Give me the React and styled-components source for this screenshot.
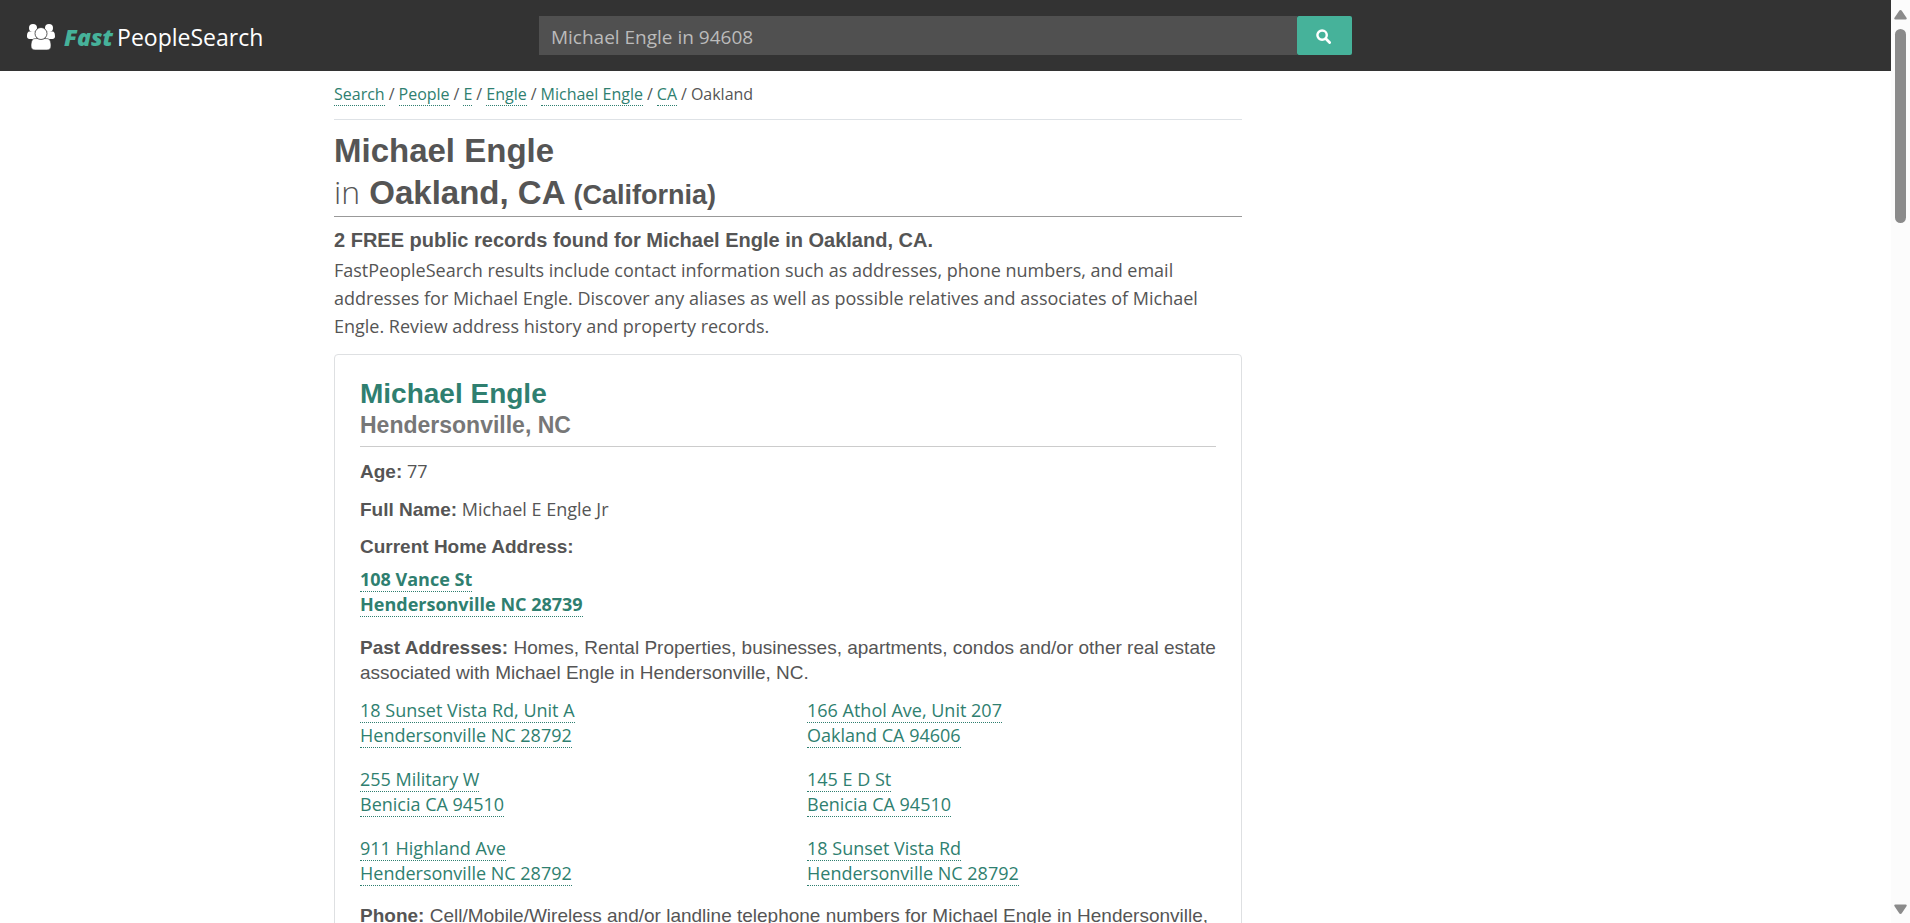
import React from "react";
import styled, { createGlobalStyle } from "styled-components";

const sans = `"Segoe UI", "Open Sans", "Noto Sans", sans-serif`;
const heading = `Arial, "Liberation Sans", sans-serif`;

const GlobalStyle = createGlobalStyle`
  *, *::before, *::after { box-sizing: border-box; }
  body {
    margin: 0;
    background: #fff;
    color: #555;
    font: 18px/25px ${sans};
  }
  h1, h2, h3, h4, p, ol, ul, dl, dd { margin: 0; padding: 0; }
`;

const Viewport = styled.div`
  display: grid;
  grid-template-columns: minmax(0, 1fr) 19px;
  height: 100vh;
`;

const Page = styled.div`
  overflow: hidden;
`;

const Header = styled.header`
  display: grid;
  grid-template-columns: 1fr 43% 1fr;
  align-items: center;
  height: 71px;
  background: #333;
`;

const Brand = styled.a`
  display: flex;
  align-items: center;
  gap: 9px;
  padding: 2px 0 0 27px;
  color: #fff;
  font-size: 23px;
  line-height: 32px;
  text-decoration: none;

  svg { width: 28px; height: 26px; }
`;

const BrandAccent = styled.em`
  margin-right: 4px;
  color: #46b29a;
  font-weight: 800;
`;

const SearchForm = styled.form`
  display: flex;
  height: 39px;
`;

const SearchInput = styled.input`
  flex: 1;
  min-width: 0;
  padding: 3px 12px 0;
  border: 0;
  border-radius: 0;
  background: #505050;
  color: #bbb;
  font: 19px/25px ${sans};
`;

const SearchButton = styled.button`
  display: grid;
  place-items: center;
  width: 55px;
  padding: 2px 2px 0 0;
  border: 0;
  border-radius: 2px;
  background: #46b29a;
  color: #fff;

  svg { width: 15px; height: 15px; }
`;

const Container = styled.div`
  display: grid;
  grid-template-columns: minmax(0, 908fr) minmax(0, 315fr);
  max-width: 1223px;
  margin: 0 auto;
`;

const Breadcrumbs = styled.ol`
  display: flex;
  gap: 4px;
  padding: 12px 0 13px;
  border-bottom: 1px solid #dee2e6;
  font-size: 16px;
  line-height: 23px;
  list-style: none;
`;

const Crumb = styled.li`
  & + &::before { content: "/"; margin-right: 4px; }
`;

const DottedLink = styled.a`
  border-bottom: 1px dotted #2f7f70;
  color: #2f7f70;
  text-decoration: none;
`;

const Title = styled.h1`
  padding: 10px 0 2px;
  border-bottom: 1px solid #999;
  font: 700 33px/42px ${heading};

  span { display: block; }
  small { font-size: 27px; line-height: 32px; }
`;

const TitleIn = styled.i`
  font: 300 32px/32px ${sans};
`;

const Summary = styled.h2`
  padding: 9px 0 2px;
  font: 700 20px/28px ${heading};
`;

const Intro = styled.p`
  margin-bottom: 14px;
  font-size: 18px;
  line-height: 28px;
`;

const Card = styled.article`
  padding: 22px 25px;
  border: 1px solid #dee0e2;
  border-radius: 4px;
`;

const CardHeader = styled.header`
  padding-bottom: 7px;
  border-bottom: 1px solid #ccc;
`;

const CardName = styled.h2`
  font: 700 28px/34px ${heading};

  a { color: #2f7f70; text-decoration: none; }
`;

const CardPlace = styled.p`
  color: #777;
  font: 700 23px/28px ${heading};
`;

const Field = styled.div`
  margin-top: ${(p) => p.$gap}px;
  font-family: ${(p) => (p.$plain ? heading : sans)};
  font-size: ${(p) => (p.$plain ? 19 : 18)}px;
  line-height: 25px;
`;

const Label = styled.h3`
  display: inline;
  font: 700 19px/25px ${heading};
`;

const Address = styled(DottedLink)`
  font-weight: ${(p) => (p.$bold ? 700 : 400)};
`;

const AddressGrid = styled.ul`
  display: grid;
  grid-template-columns: 1fr 409px;
  row-gap: 19px;
  margin-top: 13px;
  list-style: none;
`;

const ScrollTrack = styled.div`
  display: flex;
  flex-direction: column;
  align-items: center;
  padding: 9px 0 8px;
  background: #fcfcfc;

  svg { width: 13px; height: 11px; fill: #8b8b8b; }
`;

const ScrollThumb = styled.div`
  width: 11px;
  height: 194px;
  margin: 9px 0 auto;
  border-radius: 6px;
  background: #8b8b8b;
`;

const crumbs = ["Search", "People", "E", "Engle", "Michael Engle", "CA"];

const pastAddresses = [
  ["18 Sunset Vista Rd, Unit A", "Hendersonville NC 28792"],
  ["166 Athol Ave, Unit 207", "Oakland CA 94606"],
  ["255 Military W", "Benicia CA 94510"],
  ["145 E D St", "Benicia CA 94510"],
  ["911 Highland Ave", "Hendersonville NC 28792"],
  ["18 Sunset Vista Rd", "Hendersonville NC 28792"],
];

function PeopleIcon() {
  return (
    <svg viewBox="0 0 28 26" fill="#fff" aria-hidden="true">
      <circle cx="6" cy="4" r="4" />
      <circle cx="22" cy="4" r="4" />
      <path d="M2.5 7.5h7v7.5H2.5C1 15 0 14 0 12.5c0-2.500.5-5 2.500-5zM18.500 7.500h7c2 0 2.500 2.500 2.500 5 0 1.500-1 2.500-2.500 2.500h-7z" />
      <path
        d="M8 14.600h12c3 0 4 3.400 4 7.400 0 2.500-1.500 4-4 4H8c-2.500 0-4-1.500-4-4 0-4 1-7.400 4-7.400z"
        stroke="#333"
        strokeWidth="0.6"
      />
      <circle cx="14" cy="9.500" r="6" stroke="#333" strokeWidth="0.8" />
    </svg>
  );
}

function SearchIcon() {
  return (
    <svg viewBox="0 0 16 16" fill="none" stroke="currentColor" aria-hidden="true">
      <circle cx="6.500" cy="6.500" r="5" strokeWidth="2.600" />
      <path d="M10.500 10.500l4 4" strokeWidth="3" strokeLinecap="round" />
    </svg>
  );
}

export default function App() {
  return (
    <>
      <GlobalStyle />
      <Viewport>
        <Page>
          <Header>
            <Brand href="#home">
              <PeopleIcon />
              <span>
                <BrandAccent>Fast</BrandAccent>PeopleSearch
              </span>
            </Brand>
            <SearchForm role="search" onSubmit={(e) => e.preventDefault()}>
              <SearchInput aria-label="Search" defaultValue="Michael Engle in 94608" />
              <SearchButton type="submit" aria-label="Search">
                <SearchIcon />
              </SearchButton>
            </SearchForm>
          </Header>
          <Container>
            <main>
              <nav aria-label="Breadcrumb">
                <Breadcrumbs>
                  {crumbs.map((c) => (
                    <Crumb key={c}>
                      <DottedLink href="#crumb">{c}</DottedLink>
                    </Crumb>
                  ))}
                  <Crumb aria-current="page">Oakland</Crumb>
                </Breadcrumbs>
              </nav>
              <Title>
                <span>Michael Engle</span>
                <TitleIn>in</TitleIn> Oakland, CA <small>(California)</small>
              </Title>
              <Summary>2 FREE public records found for Michael Engle in Oakland, CA.</Summary>
              <Intro>
                FastPeopleSearch results include contact information such as addresses, phone
                numbers, and email addresses for Michael Engle. Discover any aliases as well as
                possible relatives and associates of Michael Engle. Review address history and
                property records.
              </Intro>
              <Card>
                <CardHeader>
                  <CardName>
                    <a href="#person">Michael Engle</a>
                  </CardName>
                  <CardPlace>Hendersonville, NC</CardPlace>
                </CardHeader>
                <Field $gap={12}>
                  <Label>Age:</Label> 77
                </Field>
                <Field $gap={13}>
                  <Label>Full Name:</Label> Michael E Engle Jr
                </Field>
                <Field $gap={12}>
                  <Label>Current Home Address:</Label>
                </Field>
                <Field $gap={8}>
                  <Address href="#address" $bold>
                    108 Vance St
                    <br />
                    Hendersonville NC 28739
                  </Address>
                </Field>
                <Field $gap={18} $plain>
                  <Label>Past Addresses:</Label> Homes, Rental Properties, businesses, apartments,
                  condos and/or other real estate associated with Michael Engle in Hendersonville,
                  NC.
                </Field>
                <AddressGrid>
                  {pastAddresses.map(([street, city]) => (
                    <li key={street}>
                      <Address href="#address">
                        {street}
                        <br />
                        {city}
                      </Address>
                    </li>
                  ))}
                </AddressGrid>
                <Field $gap={17} $plain>
                  <Label>Phone:</Label> Cell/Mobile/Wireless and/or landline telephone numbers for
                  Michael Engle in Hendersonville, NC.
                </Field>
              </Card>
            </main>
          </Container>
        </Page>
        <ScrollTrack aria-hidden="true">
          <svg viewBox="0 0 13 11">
            <path d="M6.500 1q.8 0 1.300.8l4.700 7q.8 1.700-1 1.700H1.500q-1.800 0-1-1.700l4.700-7Q5.700 1 6.500 1z" />
          </svg>
          <ScrollThumb />
          <svg viewBox="0 0 13 11">
            <path d="M6.500 10q.8 0 1.300-.8l4.700-7Q13.300.5 11.500.5h-10Q-.3.5.5 2.200l4.700 7q.5.8 1.300.8z" />
          </svg>
        </ScrollTrack>
      </Viewport>
    </>
  );
}
